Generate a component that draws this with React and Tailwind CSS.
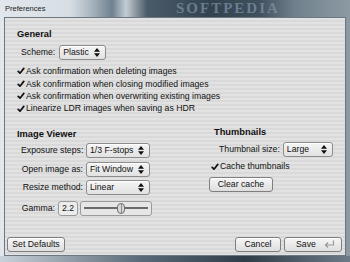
import React from 'react';

const font = { fontFamily: '"Liberation Sans", Arial, sans-serif' };

function Check() {
  return (
    <svg width="8" height="8" viewBox="0 0 8 8" className="shrink-0">
      <path d="M1.2 4.3 L3 6.2 L6.8 1.4" fill="none" stroke="#111" strokeWidth="1.7" strokeLinecap="round" strokeLinejoin="round" />
    </svg>
  );
}

function Arrows() {
  return (
    <svg width="6" height="9" viewBox="0 0 6 9" className="shrink-0">
      <path d="M3 0 L6 3.8 L0 3.8 Z M3 9 L6 5.2 L0 5.2 Z" fill="#111" />
    </svg>
  );
}

function Select({ value, width }) {
  return (
    <div
      className={`flex h-[15px] items-center justify-between rounded-[3px] border border-[#8c8c8c] bg-[linear-gradient(#f4f4f4,#e2e2e2)] pl-[3px] pr-[5px] shadow-[inset_0_1px_0_#fff] ${width}`}
    >
      <span className="whitespace-nowrap leading-none">{value}</span>
      <Arrows />
    </div>
  );
}

function Button({ children, className = '' }) {
  return (
    <div
      className={`flex h-[15px] items-center whitespace-nowrap rounded-[3px] border border-[#7f7f7f] bg-[linear-gradient(#f6f6f6,#dedede)] shadow-[inset_0_1px_0_#fff] ${className}`}
    >
      {children}
    </div>
  );
}

function CheckRow({ label }) {
  return (
    <div className="flex h-[12.4px] items-center gap-[1px]">
      <Check />
      <span className="whitespace-nowrap leading-none">{label}</span>
    </div>
  );
}

function Row({ label, children }) {
  return (
    <div className="flex items-center gap-[3px] pl-[4px]">
      <span className="w-[62px] whitespace-nowrap text-right">{label}</span>
      {children}
    </div>
  );
}

export default function App() {
  return (
    <div
      className="relative flex h-[262px] w-[350px] flex-col overflow-hidden bg-[linear-gradient(90deg,#e1e7ec_0%,#d6dee4_20%,#a9b6c0_26%,#6f8190_32%,#c3ccd3_36%,#4a5b69_42%,#33424f_60%,#3f4f5c_74%,#6f808c_84%,#8d9aa4_100%)] text-[8.7px] text-[#111]"
      style={font}
    >
      {/* title bar */}
      <div className="relative flex h-[17px] shrink-0 items-center pl-[5px]">
        <span className="text-[7.5px] leading-none text-[#1a1a1a]">Preferences</span>
        <span
          className="absolute left-[176px] top-[1px] text-[15px] font-bold leading-none tracking-[2px] text-[#7f94a8] opacity-70"
          style={{ fontFamily: '"Liberation Serif", serif' }}
        >
          SOFTPEDIA
        </span>
      </div>

      {/* panel */}
      <div className="mx-[4px] flex h-[239px] flex-col border border-[#6d7780] bg-[repeating-linear-gradient(180deg,#e2e2e2_0px,#e2e2e2_2px,#d9d9d9_2px,#d9d9d9_4px)] pl-[12px] pr-[3px]">
        <div className="mt-[12px] text-[9.3px] font-bold leading-none">General</div>
        <div className="mt-[6px] flex items-center gap-[4px] pl-[4px]">
          <span>Scheme:</span>
          <Select value="Plastic" width="w-[47px]" />
        </div>

        <div className="mt-[5px] flex flex-col">
          <CheckRow label="Ask confirmation when deleting images" />
          <CheckRow label="Ask confirmation when closing modified images" />
          <CheckRow label="Ask confirmation when overwriting existing images" />
          <CheckRow label="Linearize LDR images when saving as HDR" />
        </div>

        <div className="mt-[15px] flex">
          {/* image viewer */}
          <div className="flex w-[192px] flex-col">
            <div className="text-[9.3px] font-bold leading-none">Image Viewer</div>
            <div className="mt-[4px] flex flex-col gap-[3.5px]">
              <Row label="Exposure steps:">
                <Select value="1/3 F-stops" width="w-[64px]" />
              </Row>
              <Row label="Open image as:">
                <Select value="Fit Window" width="w-[64px]" />
              </Row>
              <Row label="Resize method:">
                <Select value="Linear" width="w-[64px]" />
              </Row>
              <div className="mt-[2px] flex items-center gap-[2px] pl-[4px]">
                <span className="mr-[1px] w-[34px] text-right">Gamma:</span>
                <div className="flex h-[15px] w-[20px] items-center justify-center rounded-[3px] border border-[#9a9a9a] bg-[#ececec]">
                  2.2
                </div>
                <div className="relative flex h-[15px] w-[72px] items-center rounded-[3px] border border-[#9a9a9a] bg-[#e6e6e6] px-[3px]">
                  <div className="h-[2px] w-full bg-[#6a6a6a]" />
                  <div className="absolute left-[36px] top-[1px] flex h-[11px] w-[8px] items-center justify-center rounded-[4px] border border-[#6f6f6f] bg-[#d8d8d8]">
                    <div className="h-[9px] w-[1px] bg-[#8a8a8a]" />
                  </div>
                </div>
              </div>
            </div>
          </div>

          {/* thumbnails */}
          <div className="flex flex-col">
            <div className="-mt-[2px] pl-[5px] text-[9.3px] font-bold leading-none">Thumbnails</div>
            <div className="mt-[5px] flex items-center gap-[3px] pl-[10px]">
              <span className="whitespace-nowrap">Thumbnail size:</span>
              <Select value="Large" width="w-[50px]" />
            </div>
            <div className="mt-[3px] flex items-center gap-[1px] pl-[2px]">
              <Check />
              <span className="whitespace-nowrap">Cache thumbnails</span>
            </div>
            <Button className="mt-[4px] w-[64px] justify-center">Clear cache</Button>
          </div>
        </div>

        <div className="mt-auto mb-[3px] -ml-[10px] flex items-center">
          <Button className="w-[58px] justify-center">Set Defaults</Button>
          <Button className="ml-auto w-[46px] justify-center">Cancel</Button>
          <Button className="ml-[3px] w-[58px] justify-between pl-[11px] pr-[6px]">
            <span>Save</span>
            <svg width="12" height="9" viewBox="0 0 12 9">
              <path d="M10.5 0.5 V5 H3 M5 2.5 L2.5 5 L5 7.5" fill="none" stroke="#9a9a9a" strokeWidth="1.2" />
            </svg>
          </Button>
        </div>
      </div>

      <div className="h-[6px] bg-[linear-gradient(90deg,#c9d2d9,#5a6a78_40%,#2f3d49_70%,#6b7a86)]" />
    </div>
  );
}
